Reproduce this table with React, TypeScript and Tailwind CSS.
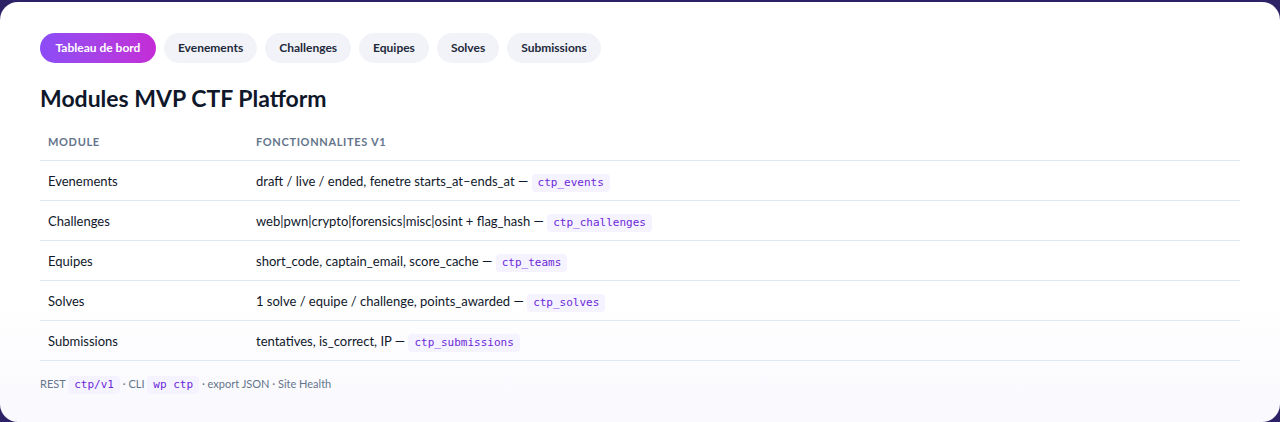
import React from 'react';

const tabs = ['Tableau de bord', 'Evenements', 'Challenges', 'Equipes', 'Solves', 'Submissions'];

const rows = [
  { module: 'Evenements', text: 'draft / live / ended, fenetre starts_at\u2013ends_at \u2014', code: 'ctp_events' },
  { module: 'Challenges', text: 'web|pwn|crypto|forensics|misc|osint + flag_hash \u2014', code: 'ctp_challenges' },
  { module: 'Equipes', text: 'short_code, captain_email, score_cache \u2014', code: 'ctp_teams' },
  { module: 'Solves', text: '1 solve / equipe / challenge, points_awarded \u2014', code: 'ctp_solves' },
  { module: 'Submissions', text: 'tentatives, is_correct, IP \u2014', code: 'ctp_submissions' },
];

function Code({ children }: { children: React.ReactNode }) {
  return (
    <code className="inline-block rounded-[4px] bg-[#f5f3ff] px-[6px] py-[1px] font-['DejaVu_Sans_Mono',monospace] text-[11px] leading-[16px] text-[#6d28d9]">
      {children}
    </code>
  );
}

export default function App() {
  return (
    <div className="h-[422px] overflow-hidden bg-[#2d2266] pt-[2px] font-['Lato',sans-serif]">
      <div className="h-[420px] rounded-[18px] bg-gradient-to-b from-white from-70% to-[#f9f9fe] px-10 pt-[31px]">
        {/* nav pills */}
        <div className="flex gap-2">
          {tabs.map((t, i) => (
            <button
              key={t}
              className={
                i === 0
                  ? 'h-[30px] rounded-full bg-gradient-to-r from-[#8b4cf6] to-[#c42bd6] px-[15.5px] text-[12px] font-bold text-white'
                  : 'h-[30px] rounded-full bg-[#f1f3f8] px-[14px] text-[12px] font-bold text-[#1e293b]'
              }
            >
              {t}
            </button>
          ))}
        </div>

        <h2 className="mt-[21px] text-[23px] font-bold leading-[28px] text-[#0f172a]">Modules MVP CTF Platform</h2>

        <table className="mt-[12px] w-full border-collapse text-left text-[13px] text-[#0f172a]">
          <thead>
            <tr className="h-[36px] border-b border-[#e2e8f0]">
              <th className="w-[208px] px-2 text-[11px] font-bold uppercase tracking-[0.06em] text-[#64748b]">Module</th>
              <th className="px-2 text-[11px] font-bold uppercase tracking-[0.06em] text-[#64748b]">Fonctionnalites V1</th>
            </tr>
          </thead>
          <tbody>
            {rows.map((r) => (
              <tr key={r.module} className="h-10 border-b border-[#e2e8f0]">
                <td className="px-2 pt-[3px]">{r.module}</td>
                <td className="px-2 pt-[3px]">
                  {r.text} <Code>{r.code}</Code>
                </td>
              </tr>
            ))}
          </tbody>
        </table>

        <p className="mt-[15px] text-[11px] text-[#64748b]">
          REST <Code>ctp/v1</Code> · CLI <Code>wp ctp</Code> · export JSON · Site Health
        </p>
      </div>
    </div>
  );
}
